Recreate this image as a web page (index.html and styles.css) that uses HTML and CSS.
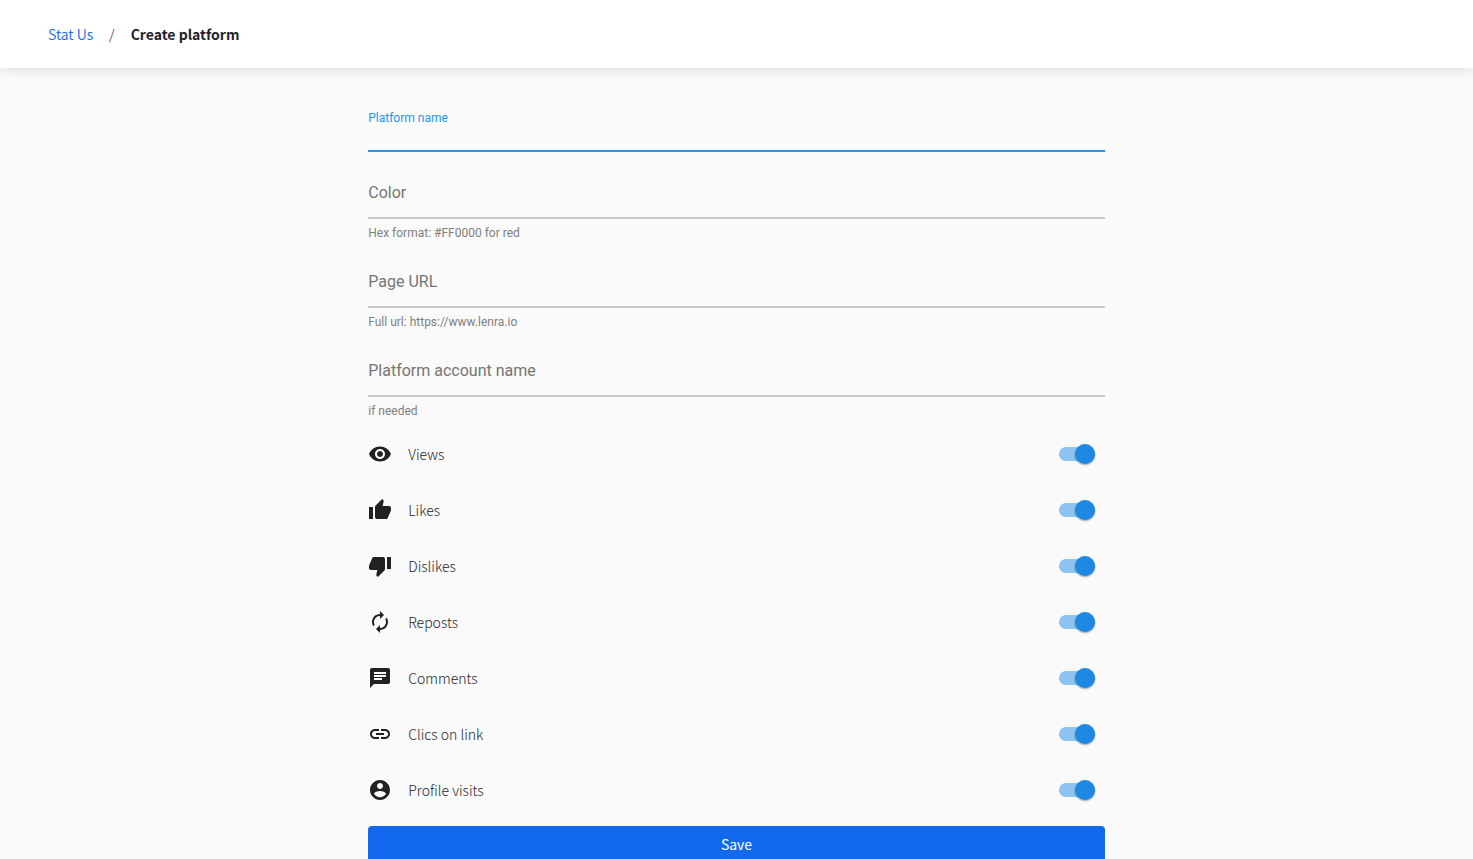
FILE: index.html
```html
<!DOCTYPE html>
<html lang="en">
<head>
<meta charset="utf-8">
<meta name="viewport" content="width=device-width, initial-scale=1">
<title>Create platform</title>
<link rel="stylesheet" href="styles.css">
</head>
<body>
<header class="topbar">
  <nav class="breadcrumb" aria-label="Breadcrumb">
    <a class="breadcrumb-link" href="#">Stat Us</a>
    <span class="breadcrumb-separator">/</span>
    <span class="breadcrumb-current" aria-current="page">Create platform</span>
  </nav>
</header>
<main class="content">
  <form class="form">
    <div class="field field-active">
      <div class="control">
        <label class="label" for="name">Platform name</label>
        <input class="input" id="name" type="text">
      </div>
    </div>
    <div class="field">
      <div class="control">
        <label class="label" for="color">Color</label>
        <input class="input" id="color" type="text" aria-describedby="color-hint">
      </div>
      <p class="hint" id="color-hint">Hex format: #FF0000 for red</p>
    </div>
    <div class="field">
      <div class="control">
        <label class="label" for="url">Page URL</label>
        <input class="input" id="url" type="text" aria-describedby="url-hint">
      </div>
      <p class="hint" id="url-hint">Full url: https://www.lenra.io</p>
    </div>
    <div class="field">
      <div class="control">
        <label class="label" for="account">Platform account name</label>
        <input class="input" id="account" type="text" aria-describedby="account-hint">
      </div>
      <p class="hint" id="account-hint">if needed</p>
    </div>

    <div class="option">
      <svg class="icon" viewBox="0 0 24 24" aria-hidden="true"><path d="M12 4.5C7 4.5 2.73 7.61 1 12c1.73 4.39 6 7.5 11 7.5s9.27-3.11 11-7.5c-1.73-4.39-6-7.5-11-7.5zM12 17c-2.76 0-5-2.24-5-5s2.24-5 5-5 5 2.24 5 5-2.24 5-5 5zm0-8c-1.66 0-3 1.34-3 3s1.34 3 3 3 3-1.34 3-3-1.34-3-3-3z"/></svg>
      <label class="option-label" for="views">Views</label>
      <input class="switch" id="views" type="checkbox" role="switch" checked>
    </div>
    <div class="option">
      <svg class="icon" viewBox="0 0 24 24" aria-hidden="true"><path d="M1 21h4V9H1v12zm22-11c0-1.1-.9-2-2-2h-6.31l.95-4.57.03-.32c0-.41-.17-.79-.44-1.06L14.17 1 7.59 7.59C7.22 7.95 7 8.45 7 9v10c0 1.1.9 2 2 2h9c.83 0 1.54-.5 1.84-1.22l3.02-7.05c.09-.23.14-.47.14-.73v-2z"/></svg>
      <label class="option-label" for="likes">Likes</label>
      <input class="switch" id="likes" type="checkbox" role="switch" checked>
    </div>
    <div class="option">
      <svg class="icon" viewBox="0 0 24 24" aria-hidden="true"><path d="M15 3H6c-.83 0-1.54.5-1.84 1.22l-3.02 7.05c-.09.23-.14.47-.14.73v2c0 1.1.9 2 2 2h6.31l-.95 4.57-.03.32c0 .41.17.79.44 1.06L9.83 23l6.59-6.59c.36-.36.58-.86.58-1.41V5c0-1.1-.9-2-2-2zm4 0v12h4V3h-4z"/></svg>
      <label class="option-label" for="dislikes">Dislikes</label>
      <input class="switch" id="dislikes" type="checkbox" role="switch" checked>
    </div>
    <div class="option">
      <svg class="icon" viewBox="0 0 24 24" aria-hidden="true"><path d="M12 6v3l4-4-4-4v3c-4.42 0-8 3.58-8 8 0 1.57.46 3.03 1.24 4.26L6.7 14.8c-.45-.83-.7-1.79-.7-2.8 0-3.31 2.69-6 6-6zm6.76 1.74L17.3 9.2c.44.84.7 1.79.7 2.8 0 3.31-2.69 6-6 6v-3l-4 4 4 4v-3c4.42 0 8-3.58 8-8 0-1.57-.46-3.03-1.24-4.26z"/></svg>
      <label class="option-label" for="reposts">Reposts</label>
      <input class="switch" id="reposts" type="checkbox" role="switch" checked>
    </div>
    <div class="option">
      <svg class="icon" viewBox="0 0 24 24" aria-hidden="true"><path d="M20 2H4c-1.1 0-1.99.9-1.99 2L2 22l4-4h14c1.1 0 2-.9 2-2V4c0-1.1-.9-2-2-2zM6 9h12v2H6V9zm8 5H6v-2h8v2zm4-6H6V6h12v2z"/></svg>
      <label class="option-label" for="comments">Comments</label>
      <input class="switch" id="comments" type="checkbox" role="switch" checked>
    </div>
    <div class="option">
      <svg class="icon" viewBox="0 0 24 24" aria-hidden="true"><path d="M3.9 12c0-1.71 1.39-3.1 3.1-3.1h4V7H7c-2.76 0-5 2.24-5 5s2.24 5 5 5h4v-1.9H7c-1.71 0-3.1-1.39-3.1-3.1zM8 13h8v-2H8v2zm9-6h-4v1.9h4c1.71 0 3.1 1.39 3.1 3.1s-1.39 3.1-3.1 3.1h-4V17h4c2.76 0 5-2.24 5-5s-2.24-5-5-5z"/></svg>
      <label class="option-label" for="clics">Clics on link</label>
      <input class="switch" id="clics" type="checkbox" role="switch" checked>
    </div>
    <div class="option">
      <svg class="icon" viewBox="0 0 24 24" aria-hidden="true"><path d="M12 2C6.48 2 2 6.48 2 12s4.48 10 10 10 10-4.48 10-10S17.52 2 12 2zm0 3c1.66 0 3 1.34 3 3s-1.34 3-3 3-3-1.34-3-3 1.34-3 3-3zm0 14.2c-2.5 0-4.71-1.28-6-3.22.03-1.99 4-3.08 6-3.08 1.99 0 5.97 1.09 6 3.08-1.29 1.94-3.5 3.22-6 3.22z"/></svg>
      <label class="option-label" for="visits">Profile visits</label>
      <input class="switch" id="visits" type="checkbox" role="switch" checked>
    </div>

    <button class="save" type="submit">Save</button>
  </form>
</main>
</body>
</html>
```

FILE: styles.css
```css
* {
  box-sizing: border-box;
}

body {
  margin: 0;
  height: 100vh;
  display: flex;
  flex-direction: column;
  background: #fafafa;
  color: #1e232c;
  font-family: "Noto Sans CJK JP", "Noto Sans", sans-serif;
  font-size: 14px;
  font-weight: 300;
  line-height: 20px;
}

.topbar {
  flex: none;
  z-index: 1;
  padding: 24px 48px;
  background: #fff;
  box-shadow: 0 2px 12px rgba(0, 0, 0, 0.1);
}

.breadcrumb {
  display: flex;
  gap: 16px;
}

.breadcrumb-link {
  color: #1269ee;
  font-weight: 350;
  text-decoration: none;
}

.breadcrumb-separator {
  color: #1e232c;
}

.breadcrumb-current {
  font-weight: 600;
}

.content {
  flex: 1;
  min-height: 0;
  padding: 24px 0;
  overflow-y: auto;
  scrollbar-width: none;
}

.form {
  width: 50%;
  margin: 0 auto;
}

.field {
  margin-bottom: 7px;
  font-family: Roboto, sans-serif;
  font-weight: 400;
}

.control {
  display: grid;
  height: 60px;
  border-bottom: 2px solid #c8c8c8;
}

.label,
.input {
  grid-area: 1 / 1;
}

.label {
  padding-top: 24px;
  color: #757575;
  font-size: 16px;
}

.input {
  width: 100%;
  padding: 24px 0 0;
  border: 0;
  outline: 0;
  background: transparent;
  font: inherit;
  font-size: 16px;
}

.field-active .control {
  border-color: #2196f3;
}

.field-active .label {
  padding-top: 16px;
  color: #2196f3;
  font-size: 12px;
}

.hint {
  margin: 0;
  padding-top: 6px;
  color: #808080;
  font-size: 12px;
  line-height: 16px;
}

.option {
  display: flex;
  align-items: center;
  gap: 16px;
  height: 56px;
  padding-right: 10px;
}

.icon {
  flex: none;
  width: 24px;
  height: 24px;
  fill: #212121;
}

.option-label {
  flex: 1;
}

.switch {
  appearance: none;
  flex: none;
  display: grid;
  align-items: center;
  width: 36px;
  height: 20px;
  margin: 0;
  cursor: pointer;
}

.switch::before,
.switch::after {
  content: "";
  grid-area: 1 / 1;
}

.switch::before {
  height: 14px;
  border-radius: 7px;
  background: #bdbdbd;
}

.switch::after {
  width: 20px;
  height: 20px;
  border-radius: 50%;
  background: #fff;
  box-shadow: 0 1px 2px rgba(0, 0, 0, 0.4);
}

.switch:checked::before {
  background: #8dc2f1;
}

.switch:checked::after {
  justify-self: end;
  background: #1e88e5;
}

.save {
  width: 100%;
  margin-top: 8px;
  padding: 8px 16px;
  border: 0;
  border-radius: 4px;
  background: #1269ee;
  color: #fff;
  font: inherit;
  font-weight: 400;
  cursor: pointer;
}
```
